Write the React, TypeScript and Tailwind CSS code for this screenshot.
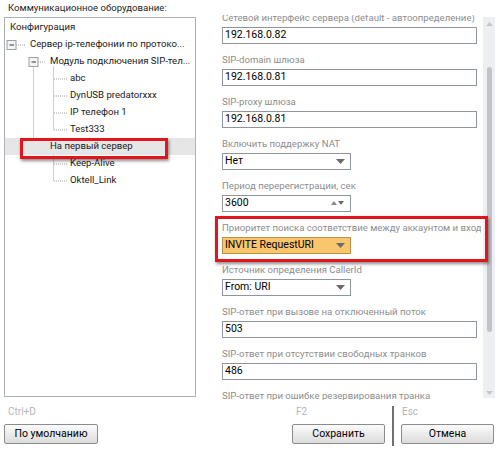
import React from 'react';

type TreeRow = { label: string; x: number; box?: boolean; selected?: boolean };

const treeRows: TreeRow[] = [
  { label: 'Конфигурация', x: 10 },
  { label: 'Сервер ip-телефонии по протоко...', x: 30, box: true },
  { label: 'Модуль подключения SIP-тел...', x: 50, box: true },
  { label: 'abc', x: 70 },
  { label: 'DynUSB predatorxxx', x: 70 },
  { label: 'IP телефон 1', x: 70 },
  { label: 'Test333', x: 70 },
  { label: 'На первый сервер', x: 50, box: true, selected: true },
  { label: 'Keep-Alive', x: 70 },
  { label: 'Oktell_Link', x: 70 },
];

const ROW = 17;

function rowY(i: number): number {
  // centre of row i inside the tree box (box content starts after 1px padding)
  return 1 + i * ROW + ROW / 2;
}

function ExpandBox({ cx, cy }: { cx: number; cy: number }): JSX.Element {
  return (
    <g>
      <rect x={cx - 4.5} y={cy - 4.5} width={9} height={9} fill="#f4f4f4" stroke="#9aa0a6" strokeWidth={1} />
      <line x1={cx - 2} y1={cy} x2={cx + 2.5} y2={cy} stroke="#3a3a3a" strokeWidth={1} />
    </g>
  );
}

function TreeLines(): JSX.Element {
  const dot = { stroke: '#a0a0a0', strokeWidth: 1, strokeDasharray: '1 1' };
  // x coordinates relative to tree box inner (box left edge at page x 5)
  const off = -5;
  const l0 = 11 + off;
  const l1 = 33 + off;
  const l2 = 53 + off;
  return (
    <svg className="absolute left-0 top-0" width={190} height={200}>
      {/* root */}
      <line x1={l0 + 5} y1={rowY(1) + 0.5} x2={l0 + 15} y2={rowY(1) + 0.5} {...dot} />
      {/* module */}
      <line x1={l1 + 5} y1={rowY(2) + 0.5} x2={l1 + 13} y2={rowY(2) + 0.5} {...dot} />
      <line x1={l1 + 0.5} y1={rowY(2) + 5} x2={l1 + 0.5} y2={rowY(7) - 5} {...dot} />
      <line x1={l2 + 0.5} y1={rowY(2) + 5} x2={l2 + 0.5} y2={rowY(6) + 0.5} {...dot} />
      {[3, 4, 5, 6].map((i) => (
        <line key={i} x1={l2 + 1} y1={rowY(i) + 0.5} x2={l2 + 14} y2={rowY(i) + 0.5} {...dot} />
      ))}
      {/* first server */}
      <line x1={l1 + 5} y1={rowY(7) + 0.5} x2={l1 + 13} y2={rowY(7) + 0.5} {...dot} />
      <line x1={l2 + 0.5} y1={rowY(7) + 5} x2={l2 + 0.5} y2={rowY(9) + 0.5} {...dot} />
      {[8, 9].map((i) => (
        <line key={i} x1={l2 + 1} y1={rowY(i) + 0.5} x2={l2 + 14} y2={rowY(i) + 0.5} {...dot} />
      ))}
      <ExpandBox cx={l0 + 0.5} cy={rowY(1) + 0.5} />
      <ExpandBox cx={l1 + 0.5} cy={rowY(2) + 0.5} />
      <ExpandBox cx={l1 + 0.5} cy={rowY(7) + 0.5} />
    </svg>
  );
}

function Field({ label, children }: { label: string; children: React.ReactNode }): JSX.Element {
  return (
    <div className="flex flex-col">
      <div className="h-[19px] whitespace-nowrap text-[9.6px] leading-[19px] text-[#8d8d8d]">{label}</div>
      {children}
    </div>
  );
}

function TextInput({ value }: { value: string }): JSX.Element {
  return (
    <div className="flex h-[17px] w-[255px] items-center border border-[#8e959c] bg-white pl-[2px] text-[10.5px] text-black">
      {value}
    </div>
  );
}

function Select({ value, orange, spinner }: { value: string; orange?: boolean; spinner?: boolean }): JSX.Element {
  return (
    <div
      className={
        orange
          ? 'flex h-[17px] w-[129px] items-center justify-between border border-[#b8924a] bg-[#f9c56d] pl-[2px] pr-[5px] text-[10.5px] text-black'
          : 'flex h-[17px] w-[129px] items-center justify-between border border-[#8e959c] bg-white pl-[2px] pr-[5px] text-[10.5px] text-black'
      }
    >
      <span>{value}</span>
      {spinner ? (
        <svg width="14" height="6" viewBox="0 0 14 6">
          <path d="M0 5 L3 1 L6 5 Z" fill="#8a8a8a" />
          <path d="M7 1 L13 1 L10 5 Z" fill="#6a6a6a" />
        </svg>
      ) : (
        <svg width="9" height="5" viewBox="0 0 9 5">
          <path d="M0 0 L9 0 L4.5 5 Z" fill="#6a6a6a" />
        </svg>
      )}
    </div>
  );
}

function Button({ children, className }: { children: React.ReactNode; className: string }): JSX.Element {
  return (
    <div
      className={
        'flex h-[20px] items-center justify-center rounded-[2px] border border-[#8c8c8c] bg-gradient-to-b from-[#fbfbfb] to-[#dcdcdc] text-[10.5px] text-black ' +
        className
      }
    >
      {children}
    </div>
  );
}

function TreeHighlight(): JSX.Element {
  return (
    <div className="absolute left-[15px] top-[120px] h-[21px] w-[148px] border-[3px] border-[#e3141b] shadow-[1px_2px_3px_rgba(0,0,0,0.45)]" />
  );
}

export default function App(): JSX.Element {
  return (
    <div
      className="relative flex h-[452px] w-[500px] flex-col overflow-hidden bg-white"
      style={{ fontFamily: 'Roboto, "Liberation Sans", Arial, sans-serif' }}
    >
      <div className="flex h-[400px]">
        {/* Left: tree */}
        <div className="flex w-[210px] flex-col">
          <div className="h-[17px] pl-[8px] text-[9.6px] leading-[16px] text-[#1e1e1e]">
            Коммуникационное оборудование:
          </div>
          <div className="relative ml-[4px] h-[380px] w-[192px] border border-[#a9b0b8] bg-white pt-[1px]">
            <TreeLines />
            {treeRows.map((r) => (
              <div
                key={r.label}
                className={
                  r.selected
                    ? 'relative flex h-[17px] items-center whitespace-nowrap bg-[#e6e6e6] text-[9.6px] text-[#1a1a1a]'
                    : 'relative flex h-[17px] items-center whitespace-nowrap text-[9.6px] text-[#1a1a1a]'
                }
                style={{ paddingLeft: r.x - 5 }}
              >
                {r.label}
              </div>
            ))}
            <TreeHighlight />
          </div>
        </div>

        {/* Right: settings */}
        <div className="relative ml-[5px] mt-[15px] flex h-[385px] w-[280px]">
          <div className="h-full w-[266px] overflow-hidden pl-[7px]">
            <div className="-mt-[7.5px] flex flex-col gap-[6px]">
              <Field label="Сетевой интерфейс сервера (default - автоопределение)">
                <TextInput value="192.168.0.82" />
              </Field>
              <Field label="SIP-domain шлюза">
                <TextInput value="192.168.0.81" />
              </Field>
              <Field label="SIP-proxy шлюза">
                <TextInput value="192.168.0.81" />
              </Field>
              <Field label="Включить поддержку NAT">
                <Select value="Нет" />
              </Field>
              <Field label="Период перерегистрации, сек">
                <Select value="3600" spinner />
              </Field>
              <Field label="Приоритет поиска соответствие между аккаунтом и входя">
                <Select value="INVITE RequestURI" orange />
              </Field>
              <Field label="Источник определения CallerId">
                <Select value="From: URI" />
              </Field>
              <Field label="SIP-ответ при вызове на отключенный поток">
                <TextInput value="503" />
              </Field>
              <Field label="SIP-ответ при отсутствии свободных транков">
                <TextInput value="486" />
              </Field>
              <Field label="SIP-ответ при ошибке резервирования транка">
                <TextInput value="" />
              </Field>
            </div>
          </div>
          {/* scrollbar */}
          <div className="ml-[2px] mt-[2px] flex h-[381px] w-[12px] flex-col items-center bg-[#eeeff3]">
            <svg className="mt-[5px]" width="7" height="4" viewBox="0 0 7 4">
              <path d="M0 4 L7 4 L3.5 0 Z" fill="#c4c6cc" />
            </svg>
            <div className="mt-[41px] h-[265px] w-[5px] rounded-[3px] bg-[#c2c3c8]" />
            <div className="flex-1" />
            <svg className="mb-[3px]" width="7" height="4" viewBox="0 0 7 4">
              <path d="M0 0 L7 0 L3.5 4 Z" fill="#c4c6cc" />
            </svg>
          </div>
          {/* annotation */}
          <div className="absolute left-[0px] top-[201px] h-[46px] w-[273px] border-[3px] border-[#e3141b] shadow-[1px_2px_3px_rgba(0,0,0,0.45)]" />
        </div>
      </div>

      {/* Footer */}
      <div className="flex h-[52px]">
        <div className="flex w-[292px] flex-col pl-[4px]">
          <div className="h-[24px] pl-[4px] pt-[4px] text-[10px] text-[#b5b5b5]">Ctrl+D</div>
          <Button className="w-[94px]">По умолчанию</Button>
        </div>
        <div className="flex w-[93px] flex-col">
          <div className="h-[24px] pl-[4px] pt-[4px] text-[10px] text-[#b5b5b5]">F2</div>
          <Button className="w-[93px]">Сохранить</Button>
        </div>
        <div className="ml-[7px] mr-[7px] mt-[6px] h-[40px] w-[2px] bg-[#707070]" />
        <div className="flex w-[93px] flex-col">
          <div className="h-[24px] pl-[1px] pt-[4px] text-[10px] text-[#b5b5b5]">Esc</div>
          <Button className="w-[93px]">Отмена</Button>
        </div>
      </div>
    </div>
  );
}
